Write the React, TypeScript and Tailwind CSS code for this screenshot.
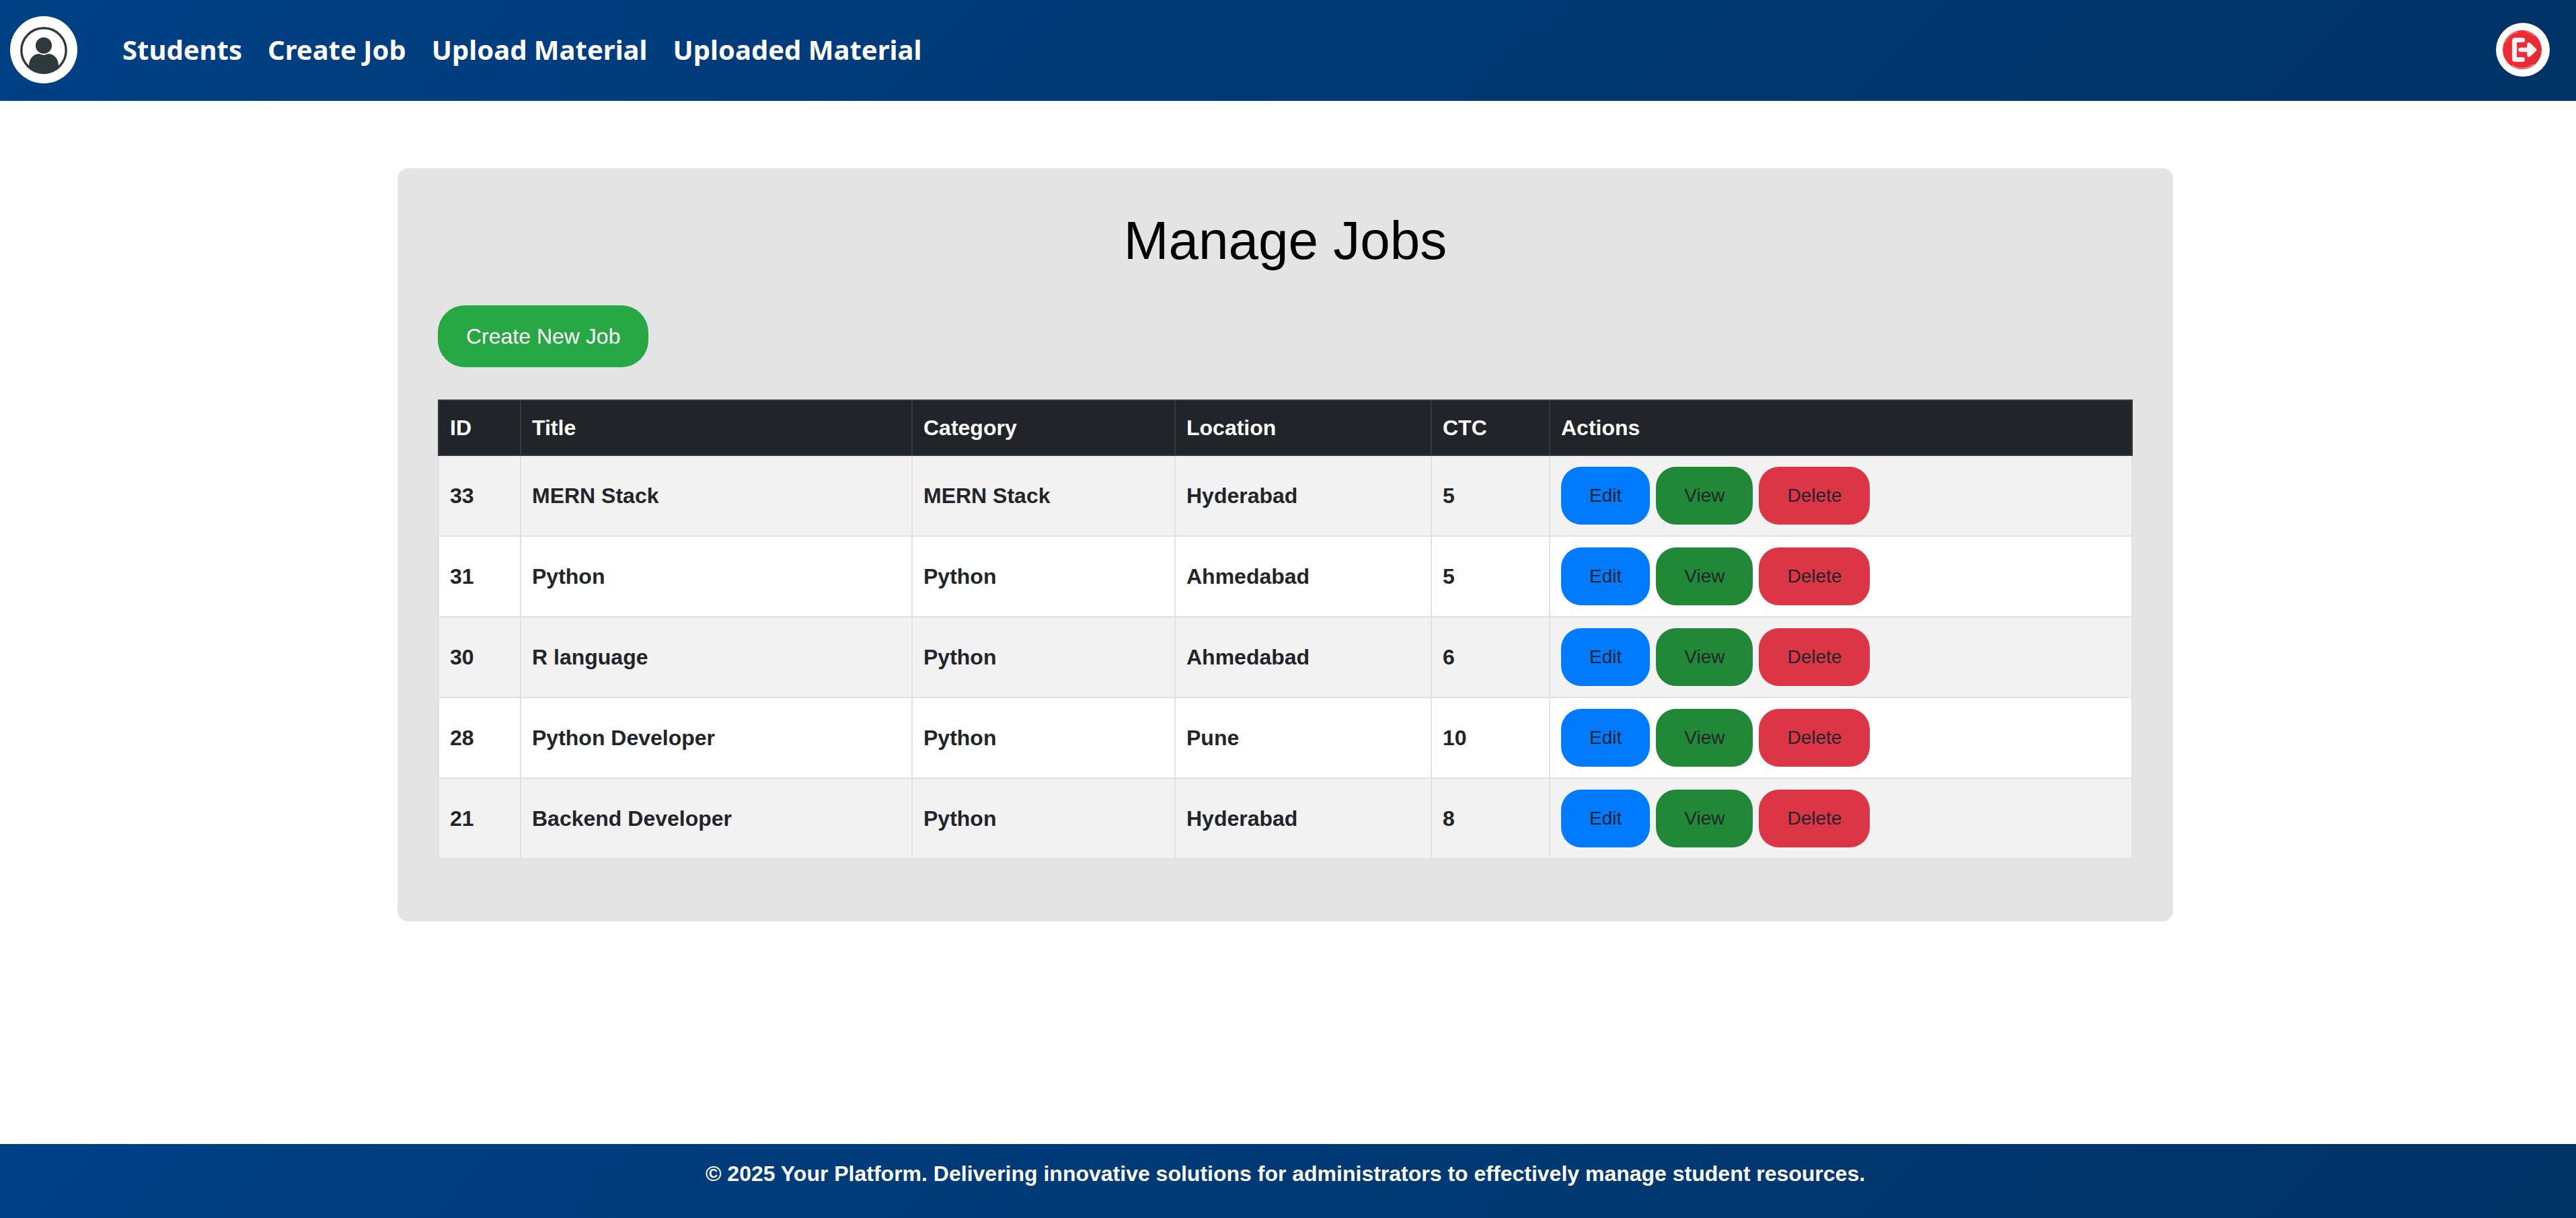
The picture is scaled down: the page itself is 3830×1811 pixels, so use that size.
const jobs = [
  { id: 33, title: "MERN Stack", category: "MERN Stack", location: "Hyderabad", ctc: 5 },
  { id: 31, title: "Python", category: "Python", location: "Ahmedabad", ctc: 5 },
  { id: 30, title: "R language", category: "Python", location: "Ahmedabad", ctc: 6 },
  { id: 28, title: "Python Developer", category: "Python", location: "Pune", ctc: 10 },
  { id: 21, title: "Backend Developer", category: "Python", location: "Hyderabad", ctc: 8 },
];

const columns = [
  { label: "ID", width: "w-[122px]" },
  { label: "Title", width: "w-[582px]" },
  { label: "Category", width: "w-[391px]" },
  { label: "Location", width: "w-[381px]" },
  { label: "CTC", width: "w-[176px]" },
  { label: "Actions", width: "" },
];

const links = ["Students", "Create Job", "Upload Material", "Uploaded Material"];

const actions = [
  { label: "Edit", color: "bg-[#007bff]" },
  { label: "View", color: "bg-[#218838]" },
  { label: "Delete", color: "bg-[#dc3545]" },
];

function AvatarIcon() {
  return (
    <svg viewBox="0 0 100 100" className="size-full" aria-hidden="true">
      <defs>
        <clipPath id="avatar-ring">
          <circle cx="50" cy="51" r="34.8" />
        </clipPath>
      </defs>
      <circle cx="50" cy="51" r="33.2" fill="none" stroke="#2f393c" strokeWidth="3.4" />
      <path
        d="M28 90V74C28 63 34.5 56 44 56H56C65.500 56 72 63 72 74V90Z"
        fill="#2f393c"
        clipPath="url(#avatar-ring)"
      />
      <circle cx="50" cy="43.700" r="14" fill="#fff" />
      <circle cx="50" cy="43.700" r="12.100" fill="#2f393c" />
    </svg>
  );
}

function LogoutIcon() {
  return (
    <svg viewBox="0 0 80 80" className="size-full" aria-hidden="true">
      <defs>
        <linearGradient id="logout-red" x1="0" y1="0" x2="1" y2="1">
          <stop offset="0" stopColor="#f42a35" />
          <stop offset="0.6" stopColor="#ef2a34" />
          <stop offset="1" stopColor="#dc2a32" />
        </linearGradient>
      </defs>
      <circle cx="39" cy="40" r="29" fill="url(#logout-red)" />
      <path d="M13.500 30A27.500 27.500 0 0 1 33 13.200" fill="none" stroke="#f9a3a8" strokeWidth="1" />
      <path d="M45 13.200A27.500 27.500 0 0 1 58 20" fill="none" stroke="#f9a3a8" strokeWidth="1" />
      <path d="M24 63A27.500 27.500 0 0 0 56 61.500" fill="none" stroke="#f79a9f" strokeWidth="1.400" />
      <path
        d="M39.500 25.500H28.500Q27.500 25.500 27.500 26.500V53.500Q27.500 54.500 28.500 54.500H39.500"
        fill="none"
        stroke="#f3f3f4"
        strokeWidth="7.200"
        strokeLinecap="round"
        strokeLinejoin="round"
      />
      <path d="M36.500 40H52" fill="none" stroke="#f3f3f4" strokeWidth="6.400" strokeLinecap="round" />
      <path
        d="M49 32L57.500 40L49 48Z"
        fill="#f3f3f4"
        stroke="#f3f3f4"
        strokeWidth="5.600"
        strokeLinejoin="round"
      />
    </svg>
  );
}

export default function App() {
  return (
    <div className="flex min-h-screen flex-col bg-white font-['Liberation_Sans',Arial,sans-serif] text-[32px] leading-[48px] text-[#212529]">
      <header className="flex items-center bg-linear-135 from-[#004085] to-[#003366] pt-6 pr-[39px] pb-[26px] pl-[15px]">
        <button type="button" aria-label="Profile" className="size-[100px] rounded-full bg-white">
          <AvatarIcon />
        </button>
        <nav className="ml-[67px] flex gap-[38px] font-['Noto_Sans',sans-serif] text-[40px] leading-[60px] font-bold text-white">
          {links.map((label) => (
            <a key={label} href="#" className="whitespace-nowrap">
              {label}
            </a>
          ))}
        </nav>
        <button type="button" aria-label="Log out" className="ml-auto size-20 rounded-full bg-white">
          <LogoutIcon />
        </button>
      </header>

      <main className="pt-[100px] pr-2 pb-[100px]">
        <section className="mx-auto w-full max-w-[2640px] rounded-2xl bg-[#e4e4e4] px-[60px] pt-[60px] pb-[92px]">
          <h1 className="mb-12 text-center text-[80px] leading-24 text-black">Manage Jobs</h1>
          <button
            type="button"
            className="mb-12 block rounded-[40px] bg-[#28a745] px-[42px] py-[22px] text-white"
          >
            Create New Job
          </button>
          <table className="w-full table-fixed border-collapse text-left font-bold">
            <thead className="bg-[#212529] text-white">
              <tr>
                {columns.map(({ label, width }) => (
                  <th key={label} scope="col" className={`border-2 border-[#373b3e] p-4 ${width}`}>
                    {label}
                  </th>
                ))}
              </tr>
            </thead>
            <tbody>
              {jobs.map((job) => (
                <tr key={job.id} className="bg-white odd:bg-[#f2f2f2]">
                  {[job.id, job.title, job.category, job.location, job.ctc].map((value, i) => (
                    <td key={i} className="border-2 border-[#dee2e6] p-4">
                      {value}
                    </td>
                  ))}
                  <td className="border-2 border-[#dee2e6] p-4">
                    <div className="flex gap-[9px]">
                      {actions.map(({ label, color }) => (
                        <button
                          key={label}
                          type="button"
                          className={`rounded-[30px] px-[42px] py-[22px] text-[28px] leading-[42px] font-normal ${color}`}
                        >
                          {label}
                        </button>
                      ))}
                    </div>
                  </td>
                </tr>
              ))}
            </tbody>
          </table>
        </section>
      </main>

      <footer className="mt-auto bg-linear-135 from-[#004085] to-[#003366] pt-5 pr-2 pb-[42px] text-center font-bold text-white">
        <p>
          © 2025 Your Platform. Delivering innovative solutions for administrators to effectively manage student
          resources.
        </p>
      </footer>
    </div>
  );
}
